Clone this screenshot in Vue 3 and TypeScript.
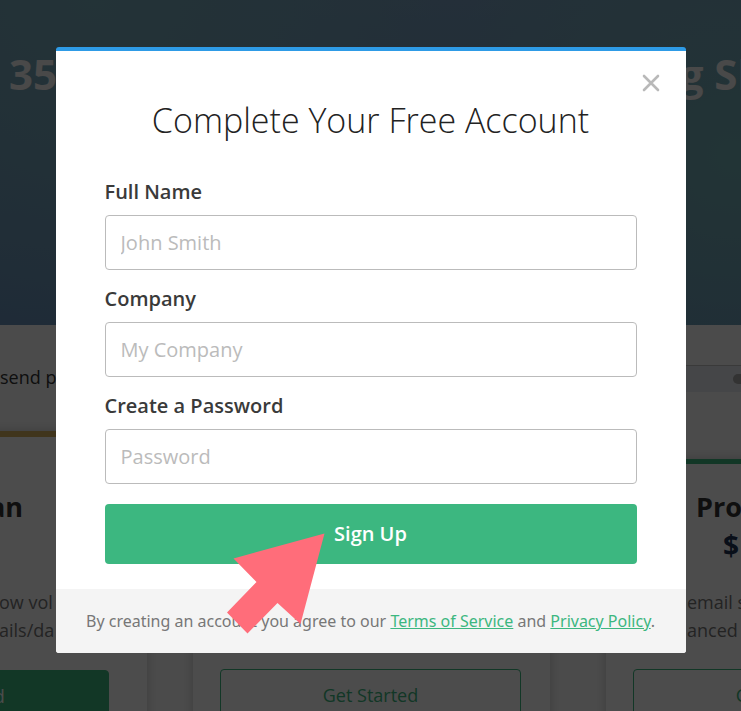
<script setup lang="ts">
import { ref } from 'vue'

interface Field {
  id: string
  label: string
  placeholder: string
  type: string
}

const fields: Field[] = [
  { id: 'full-name', label: 'Full Name', placeholder: 'John Smith', type: 'text' },
  { id: 'company', label: 'Company', placeholder: 'My Company', type: 'text' },
  { id: 'password', label: 'Create a Password', placeholder: 'Password', type: 'password' },
]

const values = ref<Record<string, string>>({ 'full-name': '', company: '', password: '' })
</script>

<template>
  <div class="page">
    <div class="site">
      <header class="hero">
        <span>35</span>
        <span>g Sh</span>
      </header>
      <div class="volume">
        <span>send p</span>
        <div class="track"><i class="knob"></i></div>
      </div>
      <div class="plans">
        <section class="plan featured">
          <h2>an</h2>
          <p>ow vol<br />ails/da</p>
          <button type="button">Get Started</button>
        </section>
        <section class="plan middle">
          <button type="button">Get Started</button>
        </section>
        <section class="plan pro">
          <h2>Pro</h2>
          <strong class="price">$</strong>
          <p>email s<br />anced r</p>
          <button type="button">Get Started</button>
        </section>
      </div>
    </div>

    <div class="overlay">
      <div class="modal" role="dialog" aria-modal="true" aria-labelledby="modal-title">
        <button class="close" type="button" aria-label="Close">
          <svg width="18" height="18" viewBox="0 0 18 18">
            <path d="M2 2L16 16M16 2L2 16" fill="none" stroke="#b9b9b9" stroke-width="2.6" stroke-linecap="round" />
          </svg>
        </button>
        <form class="body" @submit.prevent>
          <h1 id="modal-title">Complete Your Free Account</h1>
          <div class="fields">
            <div v-for="f in fields" :key="f.id" class="field">
              <label :for="f.id">{{ f.label }}</label>
              <input :id="f.id" v-model="values[f.id]" :type="f.type" :placeholder="f.placeholder" />
            </div>
          </div>
          <button class="submit" type="submit">Sign Up</button>
        </form>
        <footer class="terms">
          By creating an account you agree to our <a href="#terms">Terms of Service</a> and
          <a href="#privacy">Privacy Policy</a>.
        </footer>
        <svg class="pointer" width="98" height="101" viewBox="0 0 98 101" aria-hidden="true">
          <path d="M97.500 0.500L6.500 25.500L29.500 49L0 79.500L20.500 100.500L50.500 70L73.500 91Z" fill="#ff6d7a" />
        </svg>
      </div>
    </div>
  </div>
</template>

<style>
body {
  margin: 0;
}
</style>

<style scoped>
* {
  box-sizing: border-box;
}

.page {
  position: relative;
  height: 100vh;
  overflow: hidden;
  font-family: 'Open Sans', 'Noto Sans', sans-serif;
  background: #fbfbfb;
}

h1,
h2,
p {
  margin: 0;
}

button,
input {
  font-family: inherit;
}

.hero {
  display: flex;
  justify-content: space-between;
  height: 325px;
  padding: 44px 0 0 9px;
  margin-right: -38px;
  overflow: hidden;
  font-size: 42px;
  font-weight: 700;
  line-height: 60px;
  color: #f4f4f4;
  background:
    radial-gradient(circle at 94% 48%, #74aeb4, transparent 40%),
    radial-gradient(circle at 12% 0%, #76aab8, transparent 45%),
    linear-gradient(#789fbe, #6890b8);
}

.hero span:last-child {
  margin-right: 14px;
}

.volume {
  display: flex;
  align-items: center;
  justify-content: space-between;
  height: 106px;
  font-size: 18px;
  color: #333;
}

.volume span {
  padding-bottom: 2px;
}

.track {
  display: flex;
  align-items: center;
  justify-content: flex-end;
  width: 120px;
  height: 27px;
  overflow: hidden;
  border-top: 1px solid #c4c4c4;
  background: #e6eaf0;
}

.knob {
  width: 12px;
  height: 10px;
  margin-right: -4px;
  border-radius: 5px;
  background: #aaa;
}

.plans {
  display: grid;
  grid-template-columns: 380px 357px 367px;
  column-gap: 46px;
  align-items: start;
  width: 1196px;
  height: 400px;
  margin-left: -233px;
}

.plan {
  height: 400px;
  padding: 0 29px 0 27px;
  background: #fff;
  box-shadow: 0 0 10px rgba(0, 0, 0, 0.2);
}

.featured {
  padding: 0 38px;
  border-top: 6px solid #d5b15e;
}

.middle {
  padding-top: 238px;
}

.pro {
  margin: 28px 0 0 10px;
  border-top: 5px solid #3cb780;
}

.plan h2 {
  font-size: 27px;
  line-height: 38px;
  color: #333;
}

.plan p {
  font-size: 18px;
  line-height: 28px;
  color: #777;
}

.plan.featured h2 {
  padding: 51px 86px 0 0;
  text-align: right;
}

.plan.featured p {
  padding: 62px 0 26px 194px;
}

.plan.pro h2 {
  padding: 24px 0 0 63px;
}

.price {
  display: block;
  padding-left: 90px;
  font-size: 28px;
  line-height: 38px;
  color: #1f3355;
}

.plan.pro p {
  padding: 24px 0 25px 54px;
}

.plan button {
  width: 100%;
  height: 52px;
  padding: 0;
  border: 1px solid #3cb780;
  border-radius: 4px;
  font-size: 18px;
  color: #3cb780;
  background: transparent;
}

.plan.featured button {
  color: #fff;
  background: #3cb780;
}

.overlay {
  position: absolute;
  inset: 0;
  display: flex;
  align-items: flex-start;
  justify-content: center;
  padding: 47px 55px;
  background: rgba(0, 0, 0, 0.7);
}

.modal {
  position: relative;
  width: 100%;
  max-width: 630px;
  border-top: 4px solid #2e9be6;
  border-radius: 3px;
  background: #fff;
}

.close {
  position: absolute;
  top: 18px;
  right: 21px;
  display: flex;
  padding: 5px;
  border: 0;
  background: none;
}

.body {
  padding: 39px 49px 25px;
}

h1 {
  font-size: 34px;
  font-weight: 350;
  line-height: 60px;
  text-align: center;
  color: #222;
}

.fields {
  display: grid;
  gap: 15px;
  margin: 28px 0 20px;
}

.field {
  display: grid;
  gap: 10px;
}

label {
  font-size: 20px;
  font-weight: 600;
  line-height: 27px;
  color: #3a3a3a;
}

input {
  width: 100%;
  height: 55px;
  padding: 0 15px;
  border: 1px solid #bbb;
  border-radius: 4px;
  font-size: 20px;
  color: #333;
  background: #fff;
}

input::placeholder {
  color: #bbb;
}

.submit {
  display: block;
  width: 100%;
  height: 60px;
  padding: 0 0 2px;
  border: 0;
  border-radius: 4px;
  font-size: 20px;
  font-weight: 600;
  color: #fff;
  background: #3cb780;
}

.terms {
  padding: 20px 0;
  border-radius: 0 0 3px 3px;
  font-family: 'Noto Sans', 'Open Sans', sans-serif;
  font-size: 16px;
  line-height: 24px;
  text-align: center;
  color: #777;
  background: #f4f4f4;
}

.terms a {
  color: #3cb780;
}

.pointer {
  position: absolute;
  left: 171px;
  bottom: 19px;
}
</style>
